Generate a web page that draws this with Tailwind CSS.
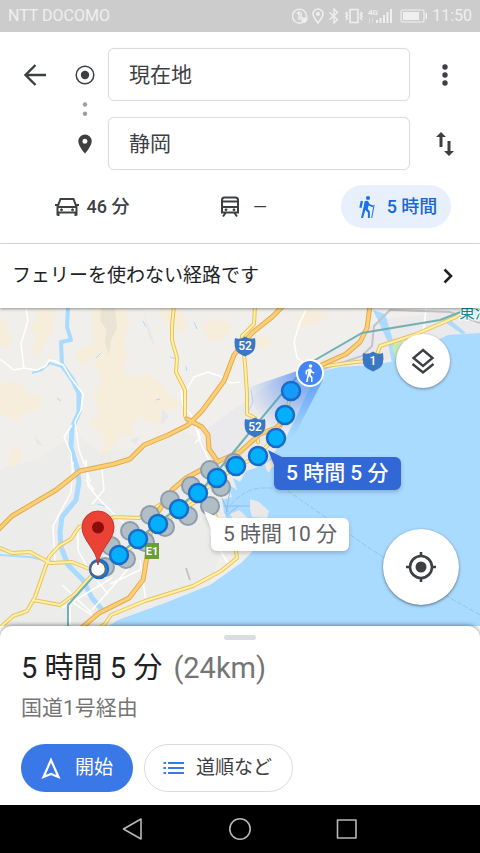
<!DOCTYPE html>
<html lang="ja">
  <head>
    <meta charset="UTF-8" />
    <meta name="viewport" content="width=device-width, initial-scale=1.0" />
    <title>現在地 → 静岡</title>
    <script src="https://cdn.jsdelivr.net/npm/@tailwindcss/browser@4"></script>
  </head>
  <body class="bg-white flex flex-col min-h-screen font-[Roboto,'Noto_Sans_CJK_JP',sans-serif] text-[#3c4043]">
    <!-- Status bar -->
    <div class="flex items-center justify-between h-8 px-2 bg-[#cccccc] text-[#efefef]">
      <span class="text-base">NTT DOCOMO</span>
      <div class="flex items-center gap-1">
        <svg class="w-4 h-4" viewBox="0 0 16 16" fill="none" stroke="currentColor" stroke-width="1.4">
          <path d="M14.500 9A7 7 0 1 0 10 14.700M5 6l2-2v8M9 4v7l2-2" />
          <path d="M10 14c0-3 2-4 5-4 0 3-2 5-5 4z" fill="currentColor" />
        </svg>
        <svg class="w-3 h-4" viewBox="0 0 12 16" fill="none" stroke="currentColor" stroke-width="1.6">
          <path d="M6 15C3 11 1 8.500 1 6a5 5 0 0 1 10 0c0 2.500-2 5-5 9z" />
          <circle cx="6" cy="6" r="1.200" fill="currentColor" />
        </svg>
        <svg class="w-3 h-4" viewBox="0 0 12 16" fill="none" stroke="currentColor" stroke-width="1.4">
          <path d="M1.500 4.500l8 7L6 15V1l3.500 3.500-8 7" />
        </svg>
        <svg class="w-5 h-4" viewBox="0 0 20 16" fill="none" stroke="currentColor" stroke-width="1.6">
          <path d="M6 1.500h8v13H6z" />
          <path d="M3.500 4L2 5.500 3.500 7 2 8.500 3.500 10 2 12M16.500 4L18 5.500 16.500 7 18 8.500 16.500 10 18 12" />
        </svg>
        <svg class="w-6 h-4" viewBox="0 0 24 16" fill="currentColor">
          <text x="0" y="7" font-size="8" font-weight="700">4G</text>
          <path d="M8 12h2v3H8zM11.500 10h2v5h-2zM15 7h2v8h-2zM18.500 4h2v11h-2zM22 1h2v14h-2z" />
          <path d="M1 15v-4l1-1v5zM4 10h1v4l-1 1z" opacity=".5" />
        </svg>
        <svg class="w-7 h-4 ml-1" viewBox="0 0 28 16" fill="none" stroke="currentColor">
          <rect x="1" y="2" width="23" height="12" rx="1.500" stroke-width="1.200" />
          <path d="M3 4h16v8H3zM25.500 5h1.500v6h-1.500z" fill="currentColor" stroke="none" />
        </svg>
        <span class="text-base">11:50</span>
      </div>
    </div>

    <!-- Origin / destination -->
    <header class="border-b border-[#e4e5e7] pt-4">
      <div class="flex">
        <button class="w-[70px] h-[53px] flex items-center justify-center" aria-label="戻る">
          <svg class="w-6 h-6" viewBox="0 0 24 24" fill="none" stroke="currentColor" stroke-width="2.400">
            <path d="M23 12H3M12.500 2L2.500 12l10 10" />
          </svg>
        </button>
        <div class="w-[30px] mr-2 flex flex-col items-center">
          <div class="h-[53px] flex items-center">
            <svg class="w-5 h-5" viewBox="0 0 20 20">
              <circle cx="10" cy="10" r="8.800" fill="none" stroke="currentColor" stroke-width="1.500" />
              <circle cx="10" cy="10" r="4.200" fill="currentColor" />
            </svg>
          </div>
          <svg class="w-4 h-4" viewBox="0 0 16 16" fill="#9aa0a6">
            <circle cx="8" cy="3.500" r="2.200" />
            <circle cx="8" cy="12.800" r="2.200" />
          </svg>
          <div class="h-[53px] flex items-center">
            <svg class="w-4 h-5" viewBox="0 0 16 20" fill="currentColor" fill-rule="evenodd">
              <path d="M8 .5A6.700 6.700 0 0 0 1.300 7.200C1.300 12 8 19.500 8 19.500s6.700-7.500 6.700-12.300A6.700 6.700 0 0 0 8 .5zm0 9.200a2.500 2.500 0 1 1 0-5 2.500 2.500 0 0 1 0 5z" />
            </svg>
          </div>
        </div>
        <div class="flex-1 flex flex-col gap-4">
          <input class="w-full h-[53px] px-5 pb-1 rounded-md border border-[#dadce0] text-[21px] shadow-[0_0_1px_#dadce0]" type="text" aria-label="出発地" value="現在地" />
          <input class="w-full h-[53px] px-5 pb-1 rounded-md border border-[#dadce0] text-[21px] shadow-[0_0_1px_#dadce0]" type="text" aria-label="目的地" value="静岡" />
        </div>
        <div class="w-[70px] flex flex-col gap-4">
          <button class="h-[53px] flex items-center justify-center" aria-label="メニュー">
            <svg class="w-6 h-6" viewBox="0 0 24 24" fill="currentColor">
              <circle cx="12" cy="4" r="2.700" />
              <circle cx="12" cy="12" r="2.700" />
              <circle cx="12" cy="20" r="2.700" />
            </svg>
          </button>
          <button class="h-[53px] flex items-center justify-center" aria-label="入れ替え">
            <svg class="w-6 h-6" viewBox="0 0 24 24" fill="currentColor">
              <path d="M8 0l5 5H9.500v10h-3V5H3zM16 24l-5-5h3.500V9h3v10H21z" />
            </svg>
          </button>
        </div>
      </div>

      <!-- Travel modes -->
      <div class="grid grid-cols-3 justify-items-center pl-4 pr-2 py-[15px] text-lg font-medium">
        <button class="h-[43px] flex items-center gap-2">
          <svg class="w-6 h-6" viewBox="0 0 24 24" fill="none" stroke="currentColor" stroke-width="2">
            <path d="M2.500 20.500v-8.500L5.500 4h13l3 8v8.500M2.500 12h19M2.500 17.500h19M0 10h3M21 10h3M3.500 18v3M20.500 18v3" />
            <circle cx="6.500" cy="14.800" r="1" fill="currentColor" stroke-width="1" />
            <circle cx="17.500" cy="14.800" r="1" fill="currentColor" stroke-width="1" />
          </svg>
          <span>46 分</span>
        </button>
        <button class="h-[43px] flex items-center gap-2" aria-label="公共交通機関">
          <svg class="w-6 h-6" viewBox="0 0 24 24" fill="none" stroke="currentColor" stroke-width="2">
            <path d="M4 17.500V5q0-2.500 2.500-2.500h11Q20 2.500 20 5v12.500zM4 6.500h16M4 12h16M7.500 18L5 21.500M16.500 18l2.500 3.500" />
            <circle cx="8" cy="14.800" r="1" fill="currentColor" stroke-width="1" />
            <circle cx="16" cy="14.800" r="1" fill="currentColor" stroke-width="1" />
          </svg>
          <span class="w-5 font-normal">—</span>
        </button>
        <button class="h-[43px] px-[14px] flex items-center gap-2 rounded-full bg-[#e8f0fe] text-[#1967d2]">
          <svg class="w-6 h-6" viewBox="0 0 24 24" fill="#1a73e8">
            <circle cx="13" cy="3" r="2.100" />
            <path d="M9.500 6.500q1.500-1 3.500-.5l1.500 3 4 1.800-.6 1.500-4.400-1.800-.6 3.500 2 2.500v6.500h-2v-5.500l-2.600-2.500L8 23H6l2.800-12z" />
            <path d="M5.700 5.800l2.300.5-1.400 6.700-2.300-.5z" />
            <path d="M18.600 9.800l1 .1L17.200 23h-1z" />
          </svg>
          <span>5 時間</span>
        </button>
      </div>
    </header>

    <button class="relative z-10 flex items-center justify-between h-16 pl-3 pr-6 bg-white text-[19px] text-[#202124] shadow-[0_1px_3px_rgba(0,0,0,0.4)]">
      <span>フェリーを使わない経路です</span>
      <svg class="w-4 h-4" viewBox="0 0 16 16" fill="none" stroke="currentColor" stroke-width="2.600">
        <path d="M4.500 1.500L11 8l-6.500 6.500" />
      </svg>
    </button>

    <!-- Map -->
    <main class="relative flex-1">
      <svg class="block w-full h-full min-h-[318px]" viewBox="0 308 480 318" preserveAspectRatio="xMidYMin slice">
        <defs>
          <radialGradient id="beam" gradientUnits="userSpaceOnUse" cx="309" cy="373" r="66">
            <stop offset="0.100" stop-color="#4285f4" stop-opacity="0.700" />
            <stop offset="1" stop-color="#4285f4" stop-opacity="0" />
          </radialGradient>
          <filter id="shadow" x="-20%" y="-20%" width="140%" height="160%">
            <feDropShadow dx="0" dy="2" stdDeviation="2" flood-opacity="0.200" />
          </filter>
          <path id="shield" d="M-10-8Q-5-6 0-9.500 5-6 10-8 12 5 5 8L0 10.500-5 8Q-12 5-10-8z" />
        </defs>
        <rect y="300" width="480" height="360" fill="#f0efeb" />

        <!-- hills -->
        <g fill="#f6eedb">
          <path d="M37 308h19l-4 22-8 14-7 16-4-10 2-14-4-8 5-8zM0 318l7 4-2 8 9 8-6 9-8-1zM0 385l13-4 12 6 3 8 15 1-3 13-12 2-10 9-18-7zM77 350l9-4 12 3-6 9-10 8-6-6zM92 308h32l6 12-6 20 4 14-6 16 10 8 14-6 14 10 10 14 14 8-12 6-14 2 8 10-14 2-12-8-8 10 2 12-12-4-8 12-4 14-10-2 4-18-6-10-8-4 8-14-4-16 8-18-8-14zM160 308h18l10 14-6 12-8-4-12-10zM202 326l12-8 18 6-4 12-18 6zM250 340l14-6 10 8-14 8zM294 318l14-8 20 4-12 10-16 4zM8 458l5-10 9 2-3 14-12 4z" />
        </g>
        <path d="M101 308h14l2 20-6 12-2 15-4-12 1-14-6-9z" fill="#eae4d4" />
        <!-- built-up area -->
        <path d="M0 470l40-12 36-24 24 18 50-6 30-16 20 10 20 22 40-30 30 4-25 60-30 20-30 80-60 30H0z" fill="#eaeaeb" opacity=".55" />
        <path d="M205 430l70-50 45-20 60-40 100-12v30l-150 35-75 80-40 30z" fill="#e7e7eb" opacity=".7" />
        <path d="M143 309l8 24 4 14-6-10zM162 408l7 8-8 10zM34 435l10 12-7-3zM130 440l10-4-4 9z" fill="#e8e7ec" />

        <!-- sea -->
        <path fill="#a9daff" d="M480 333L448 335 433 342 413 353 396 361 372 365 340 367 322 371 311 386 302 404 295 420 286 437 276 450 267 462 256 468 246 471 240 482 233 478 237 490 228 484 232 497 222 500 224 512 228 522 242 528 252 552 241 563 210 585 165 603 118 620 95 635H480z" />
        <g fill="#e9e9ea">
          <path d="M250 499l9 3 10 9-2 7-15-1-2-8zM230 514l9-4 9 8-14 3z" />
        </g>
        <path d="M265 464l12-8 4 6-10 6-2 5-3-4z" fill="#efe9dc" />
        <path fill="#a9daff" d="M373 310l12 4 9 30 4 20h-6l-4-22zM448 318l18 15-4 1-20-14z" />
        <path d="M392 345l10-5 2 10-9 8z" fill="#c5e8b7" />
        <path d="M226 510q18-22 36-22h22l85 60 60 38 60 34" fill="none" stroke="#94c2ee" stroke-dasharray="5 2" />
        <path d="M222 498l6 14M230 490l-4 24M224 506h26M226 516l12-10" fill="none" stroke="#8cbdf2" />

        <!-- rivers -->
        <g fill="none" stroke="#a9daff" stroke-linejoin="round">
          <path stroke-width="4" d="M68 306l-1 21 4 13-10 2 1 23" />
          <path stroke-width="5" d="M62 365l10 14 7 14v19l-7 16-1 20 6 20 2 14-3 18-14 17-2 15 1 15 7 18 15 15 9 18 12 14" />
          <path stroke-width="2" d="M62 367l-12-4-8 7-10 3M0 555l30 2 28 6" />
          <path d="M143 321l3 6M194 322l3 7M96 358l5-5M170 357l6 2M156 400l4-1M57 398l4 3M186 366l1 5M97 504l8 2M251 390l2 12-4 8" />
        </g>

        <!-- minor roads -->
        <g fill="none" stroke="#ffffff" stroke-width="1.500" stroke-linejoin="round">
          <path d="M26 308l2 12-7 24 3 24-10 2-14-11M24 368l13 2 9-4 3-6 6 1 8 4 8 13 12 16-2 16-6 12 4 28 7 18 4 14M72 425l-8 12 7 16 2 22M186 391l8-14 14-5 14 5 8 6 10-1M181 390l2 16 9 10 4 12 5 16 8 16 4 6M198 430l2 8-5 5M306 310l-6 12-6 20 3 16 8 6M426 308l-3 28" />
          <path d="M73 462l-2 30-18 34 2 36M86 460l2 26 12 14 16 16 20 18M78 530v20l12 22 18 22M62 585l30 28M70 625v-30M66 598l30 20M92 610l44-50M62 608l50-30M140 560l6 42M209 515l2 20 18 30M86 480l8 10M102 470l2 20-12 14M110 584l30-14" />
        </g>
        <path d="M186 568l4 12" stroke="#c4c4c8" stroke-width="2" />
        <path d="M480 323l-30-11-60-2-16 16-2 20-10 10-50 17" fill="none" stroke="#c2c4c9" stroke-width="2" />

        <!-- roads: casing, then fill -->
        <g fill="none" stroke-linejoin="round" stroke-linecap="round">
          <path stroke="#e9c25b" stroke-width="4" d="M174 306l-2 20 0 14 5 18-1 14 9 18v26M255 306l-1 18-12 12 3 28 2 30 0 20 8 4 3 24M470 306l-14 11-42 18-34 11-5 14-28 3-28 4M0 548l12 5 18-1 20 11 22-1 20 8M115 517l-36 10-8 12-12 7-10 11-14 40-8 14-14 5-11 10M33 600l27 5 15-11 20-22M115 517l24 1 22-14M185 508l14-8 14 10 8 18 14 16 2 14-16 13-28 15-48 15-34 14-6 9-20 14M291 392l-5 24-12 22-16 18-22 11-20 14-18 14-20 17-20 15-20 15-20 16" />
          <path stroke="#fff0a8" stroke-width="2" d="M174 306l-2 20 0 14 5 18-1 14 9 18v26M255 306l-1 18-12 12 3 28 2 30 0 20 8 4 3 24M470 306l-14 11-42 18-34 11-5 14-28 3-28 4M0 548l12 5 18-1 20 11 22-1 20 8M115 517l-36 10-8 12-12 7-10 11-14 40-8 14-14 5-11 10M33 600l27 5 15-11 20-22M115 517l24 1 22-14M185 508l14-8 14 10 8 18 14 16 2 14-16 13-28 15-48 15-34 14-6 9-20 14M291 392l-5 24-12 22-16 18-22 11-20 14-18 14-20 17-20 15-20 15-20 16" />
          <path stroke="#e3ac4a" stroke-width="5" d="M-2 530l14-14 44-26 24-19 34-7 16-5 14-14 24-10 20-10 14-14 22-30 10-26 18-22 20-16 22-22M187 419l15 8 6 8 1 14 9 13M370 306l-3 22-7 14-14 12-40 18M288 416l-12 12-16 6-20 18-28 12-26 14-14 12-14 22-8 22-3 22-4 24-14 18-30 15-28 24" />
          <path stroke="#fcce77" stroke-width="3" d="M-2 530l14-14 44-26 24-19 34-7 16-5 14-14 24-10 20-10 14-14 22-30 10-26 18-22 20-16 22-22M187 419l15 8 6 8 1 14 9 13M370 306l-3 22-7 14-14 12-40 18M288 416l-12 12-16 6-20 18-28 12-26 14-14 12-14 22-8 22-3 22-4 24-14 18-30 15-28 24" />
        </g>

        <!-- railway -->
        <path d="M480 306l-22 7-18 7-78 13-52 30-25 27-35 42-18 22-27 32-105 83-32 36v24" fill="none" stroke="#72b1b3" stroke-width="2" />
        <text x="459" y="318" font-size="16" fill="#198c99" stroke="#ffffff" stroke-width="2" paint-order="stroke">東海</text>

        <path d="M309 367L244 389Q265 430 292 440L323 380z" fill="url(#beam)" />

        <!-- road signs -->
        <g fill="#3b78c4" font-size="12" text-anchor="middle" font-weight="500">
          <use href="#shield" x="245" y="346" />
          <use href="#shield" x="255" y="427" />
          <use href="#shield" x="373" y="361" />
          <text x="245" y="350" fill="#ffffff">52</text>
          <text x="255" y="431" fill="#ffffff">52</text>
          <text x="373" y="365" fill="#ffffff">1</text>
        </g>

        <!-- alternative route -->
        <g fill="#b0bec5" stroke="#8f9cab" stroke-width="2">
          <circle cx="234" cy="463" r="9" />
          <circle cx="210" cy="470" r="9" />
          <circle cx="191" cy="486" r="9" />
          <circle cx="170" cy="500" r="9" />
          <circle cx="150" cy="515" r="9" />
          <circle cx="130" cy="531" r="9" />
          <circle cx="111" cy="546" r="9" />
          <circle cx="221" cy="487" r="9" />
          <circle cx="210" cy="506" r="9" />
          <circle cx="188" cy="516" r="9" />
          <circle cx="165" cy="527" r="9" />
          <circle cx="145" cy="542" r="9" />
          <circle cx="126" cy="559" r="9" />
          <circle cx="105" cy="567" r="9" />
        </g>
        <rect x="145" y="543" width="14" height="16" fill="#689f38" />
        <text x="152" y="555" font-size="11" font-weight="700" text-anchor="middle" fill="#ffffff">E1</text>

        <!-- selected route -->
        <g fill="#03b0fe" stroke="#1a6bc8" stroke-width="2.500">
          <circle cx="291" cy="391" r="9" fill="#169cf8" />
          <circle cx="285" cy="415" r="9" />
          <circle cx="276" cy="438" r="9" />
          <circle cx="258" cy="456" r="9" />
          <circle cx="236" cy="466" r="9" />
          <circle cx="217" cy="478" r="9" />
          <circle cx="198" cy="493" r="9" />
          <circle cx="179" cy="509" r="9" />
          <circle cx="158" cy="524" r="9" />
          <circle cx="138" cy="539" r="9" />
          <circle cx="119" cy="555" r="9" />
          <circle cx="99" cy="569" r="9" />
        </g>

        <!-- destination -->
        <circle cx="98" cy="569" r="7.500" fill="#ffffff" stroke="#5f6368" stroke-width="1.500" />
        <path d="M98 565C97 549 82 541 82 527a16 16 0 0 1 32 0c0 14-15 22-16 38z" fill="#ea4335" stroke="#c5352b" />
        <circle cx="98" cy="527.500" r="6" fill="#8c0b0b" />

        <!-- current location -->
        <circle cx="310" cy="373" r="13" fill="#4285f4" stroke="#ffffff" stroke-width="2" />
        <circle cx="310.500" cy="366" r="1.800" fill="#ffffff" />
        <path d="M309 368.500h2l1 2.500 2.500 1.500-.5 1.300-2.800-1.300-.5 2.500 1.800 2v5h-1.500v-4l-2-2-1.500 6H306l2.200-11-1.200.8v2.700h-1.500v-3.700z" fill="#ffffff" />

        <!-- durations -->
        <g font-size="21">
          <path filter="url(#shadow)" fill="#3367d6" d="M268 450l14 7h113a6 6 0 0 1 6 6v21a6 6 0 0 1-6 6H280a6 6 0 0 1-6-6V465z" />
          <text x="286" y="480" fill="#ffffff" font-weight="500">5 時間 5 分</text>
          <path filter="url(#shadow)" fill="#ffffff" d="M204 511l15 7h124a6 6 0 0 1 6 6v21a6 6 0 0 1-6 6H217a6 6 0 0 1-6-6V528z" />
          <text x="223" y="541" fill="#5f6368">5 時間 10 分</text>
        </g>
      </svg>

      <button class="absolute top-[26px] right-[30px] w-[54px] h-[54px] flex items-center justify-center rounded-full bg-white shadow-[0_1px_3px_rgba(0,0,0,0.4)]" aria-label="レイヤ">
        <svg class="w-6 h-7" viewBox="0 0 24 28" fill="none" stroke="currentColor" stroke-width="2.400">
          <path d="M12 3l9.500 8L12 19 2.500 11zM1.500 17L12 25.500 22.500 17" />
        </svg>
      </button>
      <button class="absolute bottom-[21px] right-[21px] w-[76px] h-[76px] flex items-center justify-center rounded-full bg-white shadow-[0_1px_3px_rgba(0,0,0,0.5)]" aria-label="現在地に移動">
        <svg class="w-8 h-8" viewBox="0 0 32 32" fill="none" stroke="currentColor" stroke-width="2.600">
          <circle cx="16" cy="16" r="11" />
          <circle cx="16" cy="16" r="5.500" fill="currentColor" stroke="none" />
          <path d="M16 1v4M16 27v4M1 16h4M27 16h4" />
        </svg>
      </button>
    </main>

    <!-- Bottom sheet -->
    <section class="relative bg-white rounded-t-xl px-[21px] pt-[9px] pb-[13px] shadow-[0_-1px_4px_rgba(0,0,0,0.4)]">
      <div class="w-8 h-[5px] mx-auto rounded-full bg-[#dadce0]"></div>
      <h1 class="mt-2 text-[29px] leading-[40px] text-[#202124]">
        5 時間 5 分 <span class="ml-1 text-[#757575]">(24km)</span>
      </h1>
      <p class="mt-1 text-[21px] leading-[32px] text-[#757575]">国道1号経由</p>
      <div class="flex gap-[11px] mt-5 text-[19px]">
        <button class="flex items-center justify-between w-[112px] h-12 pl-[18px] pr-5 rounded-full bg-[#3b78e7] text-white">
          <svg class="w-6 h-6" viewBox="0 0 24 24" fill="none" stroke="currentColor" stroke-width="2.200">
            <path d="M12 4L4.500 21 12 18l7.500 3z" />
          </svg>
          <span>開始</span>
        </button>
        <button class="flex items-center justify-between w-[149px] h-12 pl-[17px] pr-5 rounded-full border border-[#dadce0]">
          <svg class="w-6 h-6" viewBox="0 0 24 24" stroke="#3b78e7" stroke-width="2">
            <path d="M6 7h16M6 12h16M6 17h16M1.500 7h2.500M1.500 12h2.500M1.500 17h2.500" />
          </svg>
          <span>道順など</span>
        </button>
      </div>
    </section>

    <!-- System navigation -->
    <nav class="flex items-center justify-center gap-[83px] h-12 bg-black text-[#b8b8b8]">
      <button class="w-6 h-6" aria-label="戻る">
        <svg viewBox="0 0 24 24" fill="none" stroke="currentColor" stroke-width="1.600" stroke-linejoin="round">
          <path d="M20 2v20L2.500 12z" />
        </svg>
      </button>
      <button class="w-6 h-6" aria-label="ホーム">
        <svg viewBox="0 0 24 24" fill="none" stroke="currentColor" stroke-width="1.600">
          <circle cx="12" cy="12" r="10.200" />
        </svg>
      </button>
      <button class="w-6 h-6" aria-label="アプリ履歴">
        <svg viewBox="0 0 24 24" fill="none" stroke="currentColor" stroke-width="1.600" stroke-linejoin="round">
          <path d="M2.500 3h18.500v18H2.500z" />
        </svg>
      </button>
    </nav>
  </body>
</html>
